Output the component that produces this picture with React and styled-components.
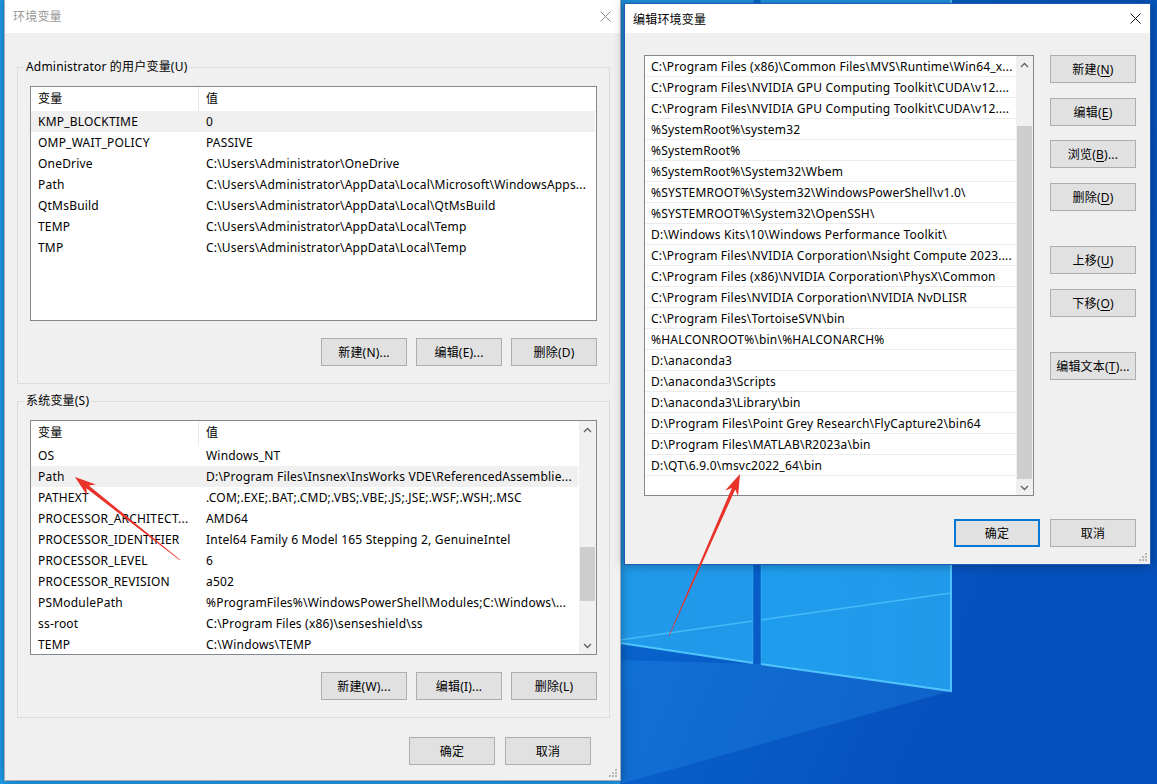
import React from "react";
import styled, { createGlobalStyle } from "styled-components";

const GlobalStyle = createGlobalStyle`
  html, body {
    margin: 0;
    padding: 0;
  }
  body {
    font-family: "Noto Sans", "Noto Sans CJK SC", sans-serif;
    font-size: 12px;
    letter-spacing: 0.2px;
    color: #000;
  }
`;

const userVars = [
  ["KMP_BLOCKTIME", "0"],
  ["OMP_WAIT_POLICY", "PASSIVE"],
  ["OneDrive", "C:\\Users\\Administrator\\OneDrive"],
  ["Path", "C:\\Users\\Administrator\\AppData\\Local\\Microsoft\\WindowsApps..."],
  ["QtMsBuild", "C:\\Users\\Administrator\\AppData\\Local\\QtMsBuild"],
  ["TEMP", "C:\\Users\\Administrator\\AppData\\Local\\Temp"],
  ["TMP", "C:\\Users\\Administrator\\AppData\\Local\\Temp"],
];

const systemVars = [
  ["OS", "Windows_NT"],
  ["Path", "D:\\Program Files\\Insnex\\InsWorks VDE\\ReferencedAssemblie..."],
  ["PATHEXT", ".COM;.EXE;.BAT;.CMD;.VBS;.VBE;.JS;.JSE;.WSF;.WSH;.MSC"],
  ["PROCESSOR_ARCHITECT...", "AMD64"],
  ["PROCESSOR_IDENTIFIER", "Intel64 Family 6 Model 165 Stepping 2, GenuineIntel"],
  ["PROCESSOR_LEVEL", "6"],
  ["PROCESSOR_REVISION", "a502"],
  ["PSModulePath", "%ProgramFiles%\\WindowsPowerShell\\Modules;C:\\Windows\\..."],
  ["ss-root", "C:\\Program Files (x86)\\senseshield\\ss"],
  ["TEMP", "C:\\Windows\\TEMP"],
];

const paths = [
  "C:\\Program Files (x86)\\Common Files\\MVS\\Runtime\\Win64_x...",
  "C:\\Program Files\\NVIDIA GPU Computing Toolkit\\CUDA\\v12....",
  "C:\\Program Files\\NVIDIA GPU Computing Toolkit\\CUDA\\v12....",
  "%SystemRoot%\\system32",
  "%SystemRoot%",
  "%SystemRoot%\\System32\\Wbem",
  "%SYSTEMROOT%\\System32\\WindowsPowerShell\\v1.0\\",
  "%SYSTEMROOT%\\System32\\OpenSSH\\",
  "D:\\Windows Kits\\10\\Windows Performance Toolkit\\",
  "C:\\Program Files\\NVIDIA Corporation\\Nsight Compute 2023....",
  "C:\\Program Files (x86)\\NVIDIA Corporation\\PhysX\\Common",
  "C:\\Program Files\\NVIDIA Corporation\\NVIDIA NvDLISR",
  "C:\\Program Files\\TortoiseSVN\\bin",
  "%HALCONROOT%\\bin\\%HALCONARCH%",
  "D:\\anaconda3",
  "D:\\anaconda3\\Scripts",
  "D:\\anaconda3\\Library\\bin",
  "D:\\Program Files\\Point Grey Research\\FlyCapture2\\bin64",
  "D:\\Program Files\\MATLAB\\R2023a\\bin",
  "D:\\QT\\6.9.0\\msvc2022_64\\bin",
];

// tapered arrow with a notched head, tip -> tail
function arrowPoints(tx, ty, ex, ey) {
  const dx = ex - tx;
  const dy = ey - ty;
  const len = Math.hypot(dx, dy);
  const ux = dx / len;
  const uy = dy / len;
  const nx = -uy;
  const ny = ux;
  const head = 21;
  const hw = 7;
  const notch = 16;
  const sw = 1.8;
  const tw = 0.3;
  const pts = [
    [tx, ty],
    [tx + ux * head + nx * hw, ty + uy * head + ny * hw],
    [tx + ux * notch + nx * sw, ty + uy * notch + ny * sw],
    [ex + nx * tw, ey + ny * tw],
    [ex - nx * tw, ey - ny * tw],
    [tx + ux * notch - nx * sw, ty + uy * notch - ny * sw],
    [tx + ux * head - nx * hw, ty + uy * head - ny * hw],
  ];
  return pts.map((p) => p.map((v) => v.toFixed(1)).join(",")).join(" ");
}

export default function App() {
  return (
    <>
      <GlobalStyle />
      <Desktop>
        <Wallpaper />

        <Window $left={4} $top={-2} $width={617} $height={783}>
          <TitleBar $height={34}>
            <Title $inactive>环境变量</Title>
            <CloseButton>
              <CloseIcon color="#8a8a8a" />
            </CloseButton>
          </TitleBar>
          <LeftBody>
            <GroupBox $gap={26}>
              <Legend>Administrator 的用户变量(U)</Legend>
              <VarList rows={userVars} selected={0} />
              <ButtonRow>
                <Button>新建(N)...</Button>
                <Button>编辑(E)...</Button>
                <Button>删除(D)</Button>
              </ButtonRow>
            </GroupBox>
            <GroupBox $gap={9}>
              <Legend>系统变量(S)</Legend>
              <VarList rows={systemVars} selected={1} scroll />
              <ButtonRow>
                <Button>新建(W)...</Button>
                <Button>编辑(I)...</Button>
                <Button>删除(L)</Button>
              </ButtonRow>
            </GroupBox>
            <DialogFooter $right={19} $top={19}>
              <Button>确定</Button>
              <Button>取消</Button>
            </DialogFooter>
          </LeftBody>
          <Grip />
        </Window>

        <Window $left={624} $top={3} $width={527} $height={562} $active>
          <TitleBar $height={29}>
            <Title>编辑环境变量</Title>
            <CloseButton>
              <CloseIcon color="#111" />
            </CloseButton>
          </TitleBar>
          <RightBody>
            <EditArea>
              <PathBox>
                <PathRows>
                  {paths.map((p, i) => (
                    <PathRow key={i}>{p}</PathRow>
                  ))}
                </PathRows>
                <Scrollbar thumbTop={53} thumbSize={353} />
              </PathBox>
              <SideButtons>
                <Button>新建(<u>N</u>)</Button>
                <Button>编辑(<u>E</u>)</Button>
                <Button>浏览(<u>B</u>)...</Button>
                <Button>删除(<u>D</u>)</Button>
                <Button $spaced>上移(<u>U</u>)</Button>
                <Button>下移(<u>O</u>)</Button>
                <Button $spaced>编辑文本(<u>T</u>)...</Button>
              </SideButtons>
            </EditArea>
            <DialogFooter $right={0} $top={23}>
              <Button $default>确定</Button>
              <Button>取消</Button>
            </DialogFooter>
          </RightBody>
          <Grip />
        </Window>

        <Annotations viewBox="0 0 1157 784">
          <polygon points={arrowPoints(75, 477, 180, 560)} fill="#e8322a" />
          <polygon points={arrowPoints(740, 474, 669, 636)} fill="#e8322a" />
        </Annotations>
      </Desktop>
    </>
  );
}

function VarList({ rows, selected, scroll }) {
  return (
    <ListView>
      <ListMain>
        <HeaderRow>
          <NameCell $header>变量</NameCell>
          <ValueCell>值</ValueCell>
        </HeaderRow>
        {rows.map(([name, value], i) => (
          <VarRow key={name + i} $selected={i === selected}>
            <NameCell>{name}</NameCell>
            <ValueCell>{value}</ValueCell>
          </VarRow>
        ))}
      </ListMain>
      {scroll && <Scrollbar thumbTop={109} thumbSize={54} />}
    </ListView>
  );
}

function Scrollbar({ thumbTop, thumbSize }) {
  return (
    <ScrollTrack>
      <ScrollArrow>
        <svg width="9" height="6" viewBox="0 0 9 6">
          <polyline points="1,5 4.5,1.5 8,5" fill="none" stroke="#606060" strokeWidth="1.3" />
        </svg>
      </ScrollArrow>
      <ThumbLane>
        <Thumb $top={thumbTop} $size={thumbSize} />
      </ThumbLane>
      <ScrollArrow>
        <svg width="9" height="6" viewBox="0 0 9 6">
          <polyline points="1,1 4.5,4.5 8,1" fill="none" stroke="#606060" strokeWidth="1.3" />
        </svg>
      </ScrollArrow>
    </ScrollTrack>
  );
}

function CloseIcon({ color }) {
  return (
    <svg width="11" height="11" viewBox="0 0 11 11">
      <path d="M0.5 0.5 L10.5 10.5 M10.5 0.5 L0.5 10.5" stroke={color} strokeWidth="1" />
    </svg>
  );
}

function Grip() {
  const dots = [
    [7, 1],
    [7, 4],
    [4, 4],
    [7, 7],
    [4, 7],
    [1, 7],
  ];
  return (
    <GripMark width="10" height="10" viewBox="0 0 10 10">
      {dots.map(([x, y], i) => (
        <rect key={i} x={x} y={y} width="2" height="2" fill="#b8b8b8" />
      ))}
    </GripMark>
  );
}

function Wallpaper() {
  return (
    <WallpaperSvg viewBox="0 0 1157 784" preserveAspectRatio="none">
      <defs>
        <linearGradient id="wallBg" x1="0" y1="0" x2="1" y2="0.3">
          <stop offset="0" stopColor="#0b86de" />
          <stop offset="0.55" stopColor="#0a6ed4" />
          <stop offset="1" stopColor="#0650bd" />
        </linearGradient>
        <linearGradient id="wallPane" x1="0" y1="0" x2="1" y2="0">
          <stop offset="0" stopColor="#1f9ded" />
          <stop offset="1" stopColor="#2199ea" />
        </linearGradient>
      </defs>
      <rect x="0" y="0" width="1157" height="784" fill="url(#wallBg)" />
      <polygon points="951,691 620,784 620,660 761,664" fill="#2a9cf0" opacity="0.25" />
      <polygon points="-10,-10 753,-10 753,663 620,643 620,800 -10,800" fill="url(#wallPane)" />
      <polygon points="761,-10 951,-10 951,691 761,664" fill="url(#wallPane)" />
      <path d="M620 640 L753 621 M761 620 L951 593" stroke="#4fc3fb" strokeWidth="1.5" opacity="0.8" />
      <path d="M620 643 L753 663 M761 664 L951 691 L951 -10" stroke="#5ad0ff" strokeWidth="2" opacity="0.85" fill="none" />
      <path d="M753 -10 L753 663 M761 -10 L761 664" stroke="#3ab2f6" strokeWidth="1" opacity="0.5" />
    </WallpaperSvg>
  );
}

const Desktop = styled.div`
  position: relative;
  width: 1157px;
  height: 784px;
  overflow: hidden;
  background: #0a6cd2;
`;

const WallpaperSvg = styled.svg`
  position: absolute;
  inset: 0;
  width: 1157px;
  height: 784px;
`;

const Annotations = styled.svg`
  position: absolute;
  inset: 0;
  width: 1157px;
  height: 784px;
  pointer-events: none;
`;

const Window = styled.div`
  position: absolute;
  left: ${(p) => p.$left}px;
  top: ${(p) => p.$top}px;
  width: ${(p) => p.$width}px;
  height: ${(p) => p.$height}px;
  box-sizing: border-box;
  display: flex;
  flex-direction: column;
  background: #f0f0f0;
  border: 1px solid ${(p) => (p.$active ? "#1d5bb4" : "#a4abb5")};
  box-shadow: 0 0 10px rgba(0, 0, 0, 0.35);
`;

const TitleBar = styled.div`
  height: ${(p) => p.$height}px;
  flex: none;
  display: flex;
  align-items: center;
  background: #fff;
  padding-left: 8px;
`;

const Title = styled.div`
  font-size: 12px;
  color: ${(p) => (p.$inactive ? "#999" : "#000")};
`;

const CloseButton = styled.div`
  margin-left: auto;
  width: 30px;
  height: 100%;
  display: flex;
  align-items: center;
  justify-content: center;
`;

const LeftBody = styled.div`
  flex: 1;
  display: flex;
  flex-direction: column;
  padding: 0 10px 0 12px;
`;

const GroupBox = styled.fieldset`
  margin: ${(p) => p.$gap}px 0 0;
  padding: 11px 12px 17px 12px;
  border: 1px solid #dcdcdc;
  min-width: 0;
`;

const Legend = styled.legend`
  padding: 0 2px;
  margin-left: -6px;
  font-size: 12px;
  line-height: 16px;
  color: #000;
`;

const ListView = styled.div`
  height: 235px;
  box-sizing: border-box;
  display: flex;
  border: 1px solid #828790;
  background: #fff;
  overflow: hidden;
`;

const ListMain = styled.div`
  flex: 1;
  min-width: 0;
  padding-right: 1px;
`;

const HeaderRow = styled.div`
  display: flex;
  height: 24px;
  line-height: 24px;
  background: #fff;
`;

const VarRow = styled.div`
  display: flex;
  height: 21px;
  line-height: 21px;
  background: ${(p) => (p.$selected ? "#f0f0f0" : "#fff")};
`;

const NameCell = styled.div`
  width: 168px;
  flex: none;
  box-sizing: border-box;
  padding-left: 7px;
  white-space: nowrap;
  overflow: hidden;
  border-right: 1px solid ${(p) => (p.$header ? "#e5e5e5" : "transparent")};
`;

const ValueCell = styled.div`
  flex: 1;
  min-width: 0;
  padding-left: 7px;
  white-space: nowrap;
  overflow: hidden;
`;

const ScrollTrack = styled.div`
  width: 17px;
  flex: none;
  display: flex;
  flex-direction: column;
  background: #f0f0f0;
`;

const ScrollArrow = styled.div`
  height: 17px;
  flex: none;
  display: flex;
  align-items: center;
  justify-content: center;
`;

const ThumbLane = styled.div`
  flex: 1;
  padding: 0 1px;
`;

const Thumb = styled.div`
  margin-top: ${(p) => p.$top}px;
  height: ${(p) => p.$size}px;
  background: #cdcdcd;
`;

const ButtonRow = styled.div`
  display: flex;
  justify-content: flex-end;
  gap: 9px;
  margin-top: 17px;
`;

const DialogFooter = styled.div`
  display: flex;
  justify-content: flex-end;
  gap: 10px;
  margin-top: ${(p) => p.$top}px;
  margin-right: ${(p) => p.$right}px;
`;

const Button = styled.button`
  width: 86px;
  height: 28px;
  flex: none;
  box-sizing: border-box;
  padding: 0;
  margin: 0;
  margin-top: ${(p) => (p.$spaced ? "21px" : "0")};
  font-family: inherit;
  font-size: 12px;
  letter-spacing: 0.2px;
  color: #000;
  background: #e1e1e1;
  border: ${(p) => (p.$default ? "2px solid #0078d7" : "1px solid #adadad")};
  border-radius: 0;

  u {
    text-decoration-thickness: 1px;
    text-underline-offset: 2px;
  }
`;

const RightBody = styled.div`
  flex: 1;
  display: flex;
  flex-direction: column;
  padding: 22px 14px 0 19px;
`;

const EditArea = styled.div`
  display: flex;
  gap: 16px;
`;

const PathBox = styled.div`
  width: 390px;
  height: 441px;
  box-sizing: border-box;
  display: flex;
  border: 1px solid #828790;
  background: #fff;
`;

const PathRows = styled.div`
  flex: 1;
  min-width: 0;
`;

const PathRow = styled.div`
  height: 21px;
  line-height: 21px;
  box-sizing: border-box;
  padding-left: 6px;
  border-bottom: 1px solid #ececec;
  white-space: nowrap;
  overflow: hidden;
`;

const SideButtons = styled.div`
  display: flex;
  flex-direction: column;
  gap: 14.5px;
`;

const GripMark = styled.svg`
  position: absolute;
  right: 2px;
  bottom: 2px;
`;
